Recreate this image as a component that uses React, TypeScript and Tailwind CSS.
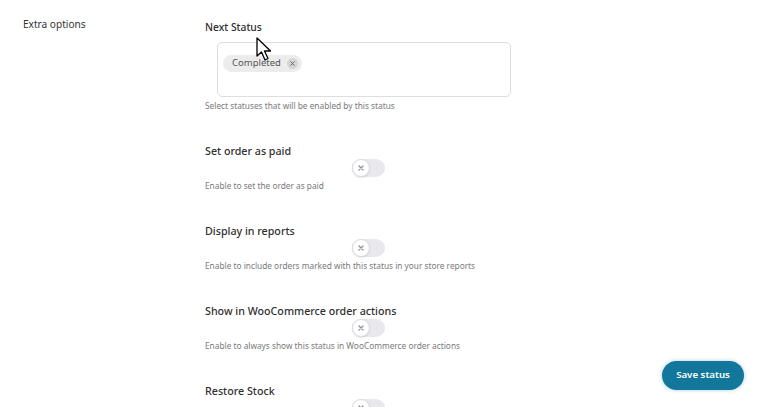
import React from "react";

function Toggle() {
  return (
    <div className="relative w-[33px] h-[18px] rounded-full bg-[#e8e8ee]">
      <div className="absolute left-0 top-0 w-[18px] h-[18px] rounded-full bg-white border border-[#dcdce2] shadow-[0_1px_2px_rgba(0,0,0,0.1)] flex items-center justify-center">
        <svg width="6" height="6" viewBox="0 0 6 6">
          <path d="M1 1L5 5M5 1L1 5" stroke="#8e8e96" strokeWidth="1.2" strokeLinecap="round" />
        </svg>
      </div>
    </div>
  );
}

function Option({ title, help }: { title: string; help: string }) {
  return (
    <div className="flex flex-col h-[80px]">
      <div className="text-[10.7px] leading-[14px] font-medium text-[#2f2f2f] h-[14px]">{title}</div>
      <div className="ml-[147px] h-[18px] mt-[1px]">
        <Toggle />
      </div>
      <div className="text-[8.3px] leading-[12px] text-[#7a7a7a] mt-[3px]">{help}</div>
    </div>
  );
}

export default function App() {
  return (
    <div className="relative w-[760px] h-[407px] overflow-hidden bg-white" style={{ fontFamily: '"Noto Sans", "Open Sans", sans-serif' }}>
      <div className="flex">
        <div className="w-[205px] pl-[23px] pt-[16px] text-[10.1px] leading-[16px] text-[#333]">Extra options</div>
        <div className="flex flex-col pt-[19px]">
          <div className="text-[10.3px] leading-[16px] font-medium text-[#2f2f2f]">Next Status</div>
          <div className="ml-[12px] mt-[7px] w-[294px] h-[55px] rounded-[5px] border border-[#dedede] p-[5px]">
            <div className="inline-flex items-center h-[17px] rounded-full bg-[#ececec] pl-[9px] pr-[4px] text-[9.5px] text-[#555]">
              Completed
              <span className="ml-[6px] w-[11px] h-[11px] rounded-full bg-[#d6d6d6] flex items-center justify-center">
                <svg width="5" height="5" viewBox="0 0 5 5">
                  <path d="M0.7 0.7L4.3 4.3M4.3 0.7L0.7 4.3" stroke="#666" strokeWidth="1" strokeLinecap="round" />
                </svg>
              </span>
            </div>
          </div>
          <div className="text-[8.3px] leading-[12px] text-[#7a7a7a] mt-[3px]">Select statuses that will be enabled by this status</div>
          <div className="mt-[32px]">
            <Option title="Set order as paid" help="Enable to set the order as paid" />
            <Option title="Display in reports" help="Enable to include orders marked with this status in your store reports" />
            <Option title="Show in WooCommerce order actions" help="Enable to always show this status in WooCommerce order actions" />
            <Option title="Restore Stock" help="" />
          </div>
        </div>
      </div>
      <button className="absolute left-[662px] top-[361px] w-[82px] h-[29px] rounded-full bg-[#12779a] text-white text-[9.7px] font-semibold shadow-[0_0_4px_rgba(18,119,154,0.35)]">
        Save status
      </button>
      <svg className="absolute left-[256px] top-[37px]" width="18" height="26" viewBox="0 0 18 26">
        <path d="M1 1 L1 19 L5.5 15 L9 23 L12 21.5 L8.5 14 L14.5 14 Z" fill="white" stroke="black" strokeWidth="1.3" strokeLinejoin="round" />
      </svg>
    </div>
  );
}
